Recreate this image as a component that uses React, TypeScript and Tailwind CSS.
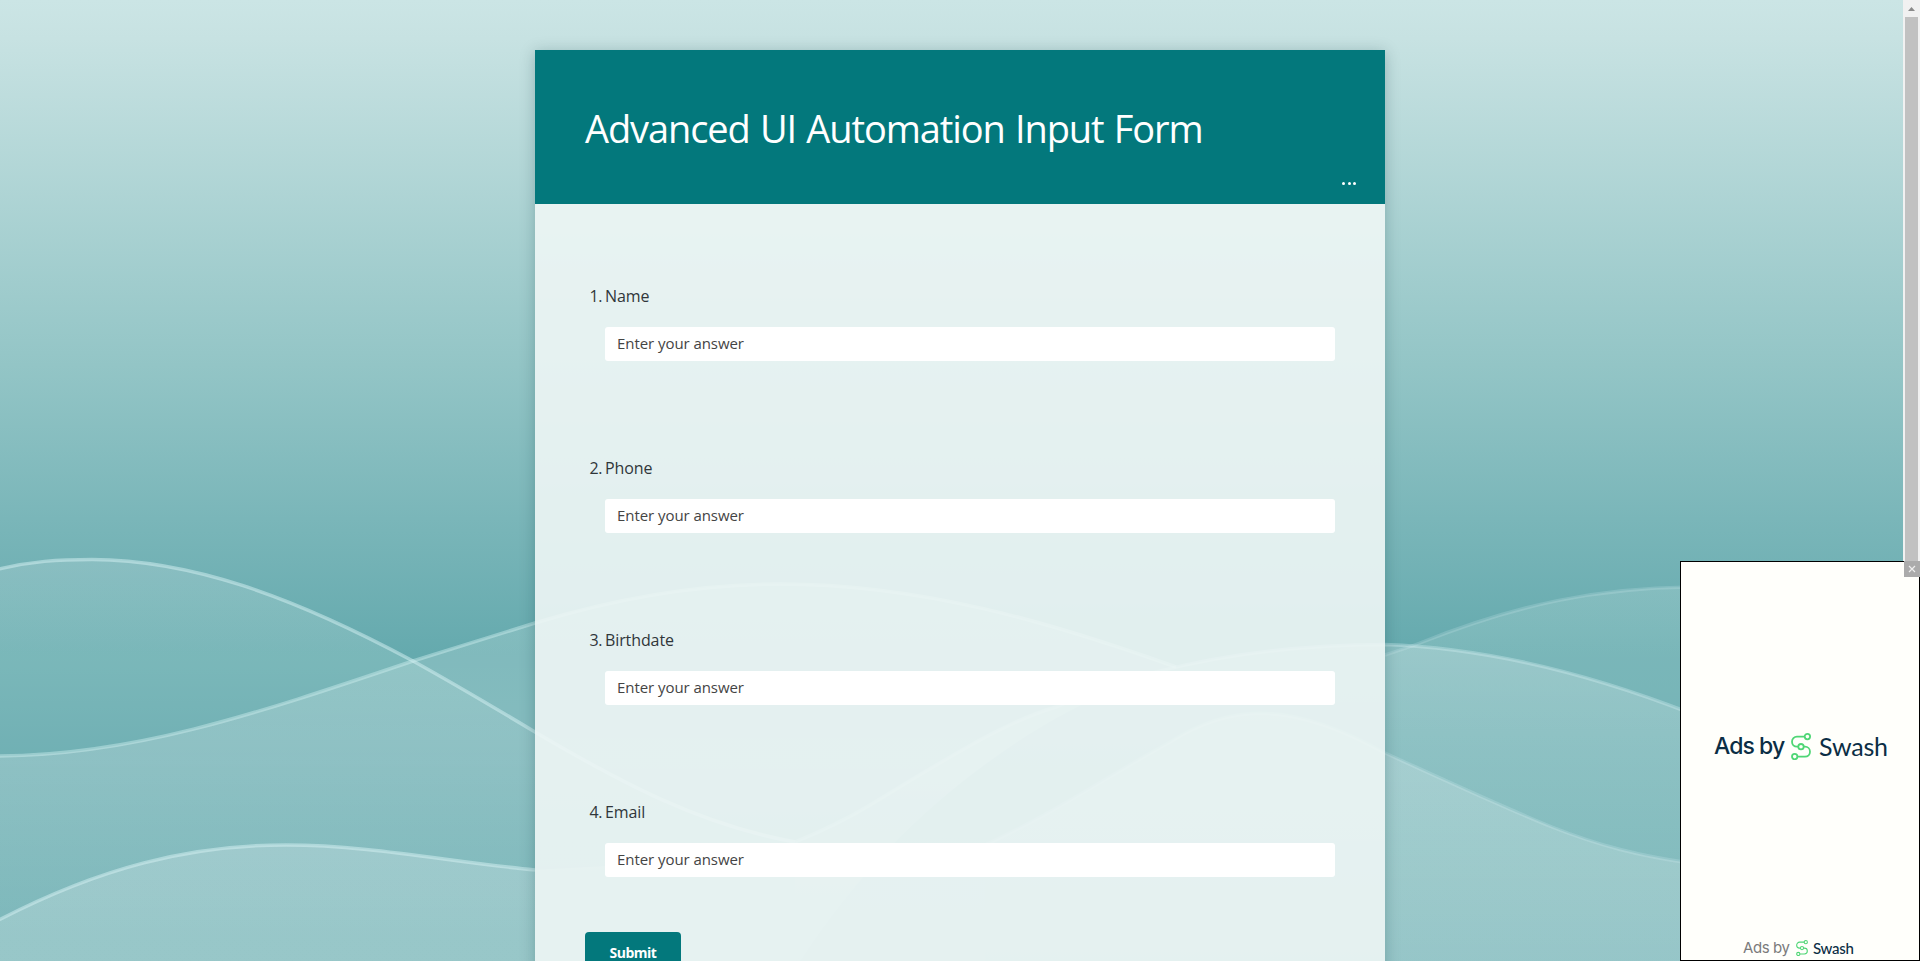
const questions = ["Name", "Phone", "Birthdate", "Email"];

const CURVE_A =
  "M-5 570 C 30 561 60 559.5 92 559.5 C 190 560 290 595 413 661 C 460 687 500 711 535 732 C 620 782 700 825 795 842";
const CURVE_B =
  "M-5 756 C 130 756 250 716 413 661 C 460 646 500 634 535 623 C 620 597 700 584 780 584 C 920 584 1050 622 1176 667";
const CURVE_C_LEFT = "M-5 922 C 100 867 190 845 286 845 C 370 845 450 862 535 870";
const CURVE_C_RIGHT =
  "M 985 845 C 1060 810 1110 775 1170 742 C 1230 704 1290 700 1385 753 C 1440 778 1500 806 1552 827 C 1600 846 1640 856 1690 863 L 1925 880";
const CURVE_D =
  "M 795 842 C 820 832 845 820 870 805 C 960 750 1010 720 1056 707 C 1150 665 1260 645 1385 644.5 C 1490 648 1590 674 1690 713 L 1925 800";
const CURVE_F =
  "M 1385 655 C 1400 650 1410 647 1420 643 C 1520 603 1600 588 1690 587 L 1925 600";

function WaveBackground() {
  return (
    <svg
      className="absolute inset-0 h-[961px] w-[1920px]"
      viewBox="0 0 1920 961"
      fill="none"
      aria-hidden="true"
    >
      <defs>
        <linearGradient id="sky" gradientUnits="userSpaceOnUse" x1="0" y1="0" x2="0" y2="961">
          <stop offset="0" stopColor="#cbe5e5" />
          <stop offset="0.04" stopColor="#c7e2e2" />
          <stop offset="0.38" stopColor="#93c5c6" />
          <stop offset="0.54" stopColor="#7ab6b9" />
          <stop offset="0.68" stopColor="#65aaae" />
          <stop offset="1" stopColor="#65aaae" />
        </linearGradient>
        <linearGradient id="fillA" gradientUnits="userSpaceOnUse" x1="0" y1="560" x2="0" y2="760">
          <stop offset="0" stopColor="#fff" stopOpacity="0.16" />
          <stop offset="0.5" stopColor="#e8fff4" stopOpacity="0.16" />
          <stop offset="1" stopColor="#fff" stopOpacity="0.07" />
        </linearGradient>
        <linearGradient id="fillB" gradientUnits="userSpaceOnUse" x1="0" y1="584" x2="0" y2="940">
          <stop offset="0" stopColor="#f0fff8" stopOpacity="0.18" />
          <stop offset="0.5" stopColor="#fff" stopOpacity="0.21" />
          <stop offset="1" stopColor="#f0fff8" stopOpacity="0.1" />
        </linearGradient>
        <linearGradient id="fillC" gradientUnits="userSpaceOnUse" x1="0" y1="710" x2="0" y2="961">
          <stop offset="0" stopColor="#fff" stopOpacity="0.22" />
          <stop offset="1" stopColor="#fff" stopOpacity="0.21" />
        </linearGradient>
        <linearGradient id="fillE" gradientUnits="userSpaceOnUse" x1="0" y1="710" x2="0" y2="961">
          <stop offset="0" stopColor="#fff" stopOpacity="0.22" />
          <stop offset="1" stopColor="#fff" stopOpacity="0.2" />
        </linearGradient>
        <linearGradient id="fillD" gradientUnits="userSpaceOnUse" x1="0" y1="645" x2="0" y2="961">
          <stop offset="0" stopColor="#fff" stopOpacity="0.24" />
          <stop offset="1" stopColor="#f0fff8" stopOpacity="0.05" />
        </linearGradient>
        <linearGradient id="fillF" gradientUnits="userSpaceOnUse" x1="0" y1="587" x2="0" y2="740">
          <stop offset="0" stopColor="#f0fff8" stopOpacity="0.17" />
          <stop offset="1" stopColor="#f0fff8" stopOpacity="0.12" />
        </linearGradient>
      </defs>
      <rect width="1920" height="961" fill="url(#sky)" />
      <path d={CURVE_A + " L 795 970 L -5 970 Z"} fill="url(#fillA)" />
      <path d={CURVE_B + " C 1060 700 900 800 795 970 L -5 970 Z"} fill="url(#fillB)" />
      <path d={CURVE_F + " L 1925 970 L 1385 970 Z"} fill="url(#fillF)" />
      <path d={CURVE_D + " L 1925 970 L 795 970 Z"} fill="url(#fillD)" />
      <path d={CURVE_C_LEFT + " L 985 845 L 985 970 L -5 970 Z"} fill="url(#fillC)" />
      <path d={CURVE_C_RIGHT + " L 1925 970 L 985 970 Z"} fill="url(#fillE)" />
      <g stroke="#d5f2f4" strokeWidth="3.5">
        <path d={CURVE_A} strokeOpacity="0.5" />
        <path d={CURVE_B} strokeOpacity="0.42" />
        <path d={CURVE_C_LEFT} strokeOpacity="0.5" />
        <path d={CURVE_D} strokeOpacity="0.35" />
        <path d={CURVE_C_RIGHT} strokeOpacity="0.22" />
        <path d={CURVE_F} strokeOpacity="0.2" />
      </g>
    </svg>
  );
}

function SwashMark({ className }: { className: string }) {
  return (
    <svg
      className={className}
      viewBox="0 0 20 27"
      fill="none"
      stroke="#4fd675"
      strokeWidth="1.8"
      aria-hidden="true"
    >
      <circle cx="16.4" cy="3.6" r="2.7" />
      <circle cx="10" cy="13.7" r="2.7" />
      <circle cx="3.7" cy="23.6" r="2.7" />
      <path d="M13.7 3.6H6a5 5 0 0 0-5 5.1c0 3 2.1 5 5 5h1.3" />
      <path d="M12.7 13.7H14a5 5 0 0 1 5 5c0 2.900-2.100 4.900-5 4.900H6.400" />
    </svg>
  );
}

function Question({ index, label }: { index: number; label: string }) {
  return (
    <div className="flex h-[172px] flex-col">
      <label className="flex h-6 text-[16px] leading-6 text-[#30363a]">
        <span className="w-5 pr-[3px] text-right tracking-[-0.4px]">{index}.</span>
        <span className="tracking-[-0.1px]">{label}</span>
      </label>
      <input
        type="text"
        placeholder="Enter your answer"
        className="mt-[19px] ml-5 h-[34px] w-[730px] rounded-[3px] bg-white px-3 pb-[2px] text-[15px] tracking-[-0.06px] text-[#333] placeholder:text-[#444]"
      />
    </div>
  );
}

function FormCard() {
  return (
    <main className="mt-[50px] flex h-[1000px] w-[850px] shrink-0 flex-col shadow-[0_2px_14px_rgba(0,50,55,0.25)]">
      <header className="flex h-[154px] shrink-0 flex-col bg-[#03787c] pl-[50px] text-white">
        <h1 className="mt-[49px] h-[58px] text-[38px] leading-[58px] tracking-[-1.1px] whitespace-nowrap [word-spacing:1.5px]">
          Advanced UI Automation Input Form
        </h1>
        <button className="mt-[23px] mr-[29px] flex gap-[2.5px] self-end py-[2px]" aria-label="More options">
          <span className="size-[3px] rounded-full bg-white" />
          <span className="size-[3px] rounded-full bg-white" />
          <span className="size-[3px] rounded-full bg-white" />
        </button>
      </header>
      <form className="flex flex-1 flex-col bg-[#eef6f5]/90 pt-[80px] pl-[50px]">
        {questions.map((q, i) => (
          <Question key={q} index={i + 1} label={q} />
        ))}
        <button
          type="button"
          className="-mt-[40px] h-[42px] w-24 shrink-0 rounded-[4px] bg-[#03787c] pb-[2px] text-[14px] font-bold tracking-[-0.5px] text-white"
        >
          Submit
        </button>
      </form>
    </main>
  );
}

function Scrollbar() {
  return (
    <div className="flex h-full w-[17px] shrink-0 flex-col items-center bg-[#f1f1f1]">
      <div className="flex h-[17px] items-center">
        <svg width="7" height="4" viewBox="0 0 7 4" aria-hidden="true">
          <path d="M0 4L3.500 0L7 4Z" fill="#8a8a8a" />
        </svg>
      </div>
      <div className="w-[13px] flex-1 bg-[#c1c1c1]" />
    </div>
  );
}

function AdPanel() {
  return (
    <aside className="absolute right-0 bottom-0 flex h-[400px] w-[240px] flex-col border border-black bg-[#fffffb] font-['Lato',sans-serif] text-[#0b2e45]">
      <button className="-mt-px -mr-px flex size-4 items-center justify-center self-end bg-[#ababab]" aria-label="Close">
        <svg width="8" height="8" viewBox="0 0 8 8" stroke="#eee" strokeWidth="1.200" aria-hidden="true">
          <path d="M1 1L7 7M7 1L1 7" />
        </svg>
      </button>
      <div className="mt-[154px] ml-[33px] flex h-[30px] items-center">
        <span className="w-[77px] font-['Inter',sans-serif] text-[23px] leading-[30px] font-medium tracking-[-0.95px] whitespace-nowrap">
          Ads by
        </span>
        <SwashMark className="h-[27px] w-5" />
        <span className="ml-2 pb-px text-[25px] leading-[30px] tracking-[-0.2px] whitespace-nowrap">Swash</span>
      </div>
      <div className="mt-[178px] ml-[62px] flex h-[18px] items-center">
        <span className="w-[53px] font-['Inter',sans-serif] text-[15px] leading-[18px] tracking-[-0.4px] whitespace-nowrap text-[#7b7b7b]">
          Ads by
        </span>
        <SwashMark className="h-4 w-3" />
        <span className="ml-[5px] pb-px text-[15px] leading-[18px] font-medium tracking-[-0.3px] whitespace-nowrap">
          Swash
        </span>
      </div>
    </aside>
  );
}

export default function App() {
  return (
    <div className="relative flex h-[961px] w-[1920px] overflow-hidden font-['Open_Sans','Noto_Sans',sans-serif]">
      <WaveBackground />
      <div className="relative flex h-full w-full">
        <div className="flex flex-1 pl-[535px]">
          <FormCard />
        </div>
        <Scrollbar />
      </div>
      <AdPanel />
    </div>
  );
}
